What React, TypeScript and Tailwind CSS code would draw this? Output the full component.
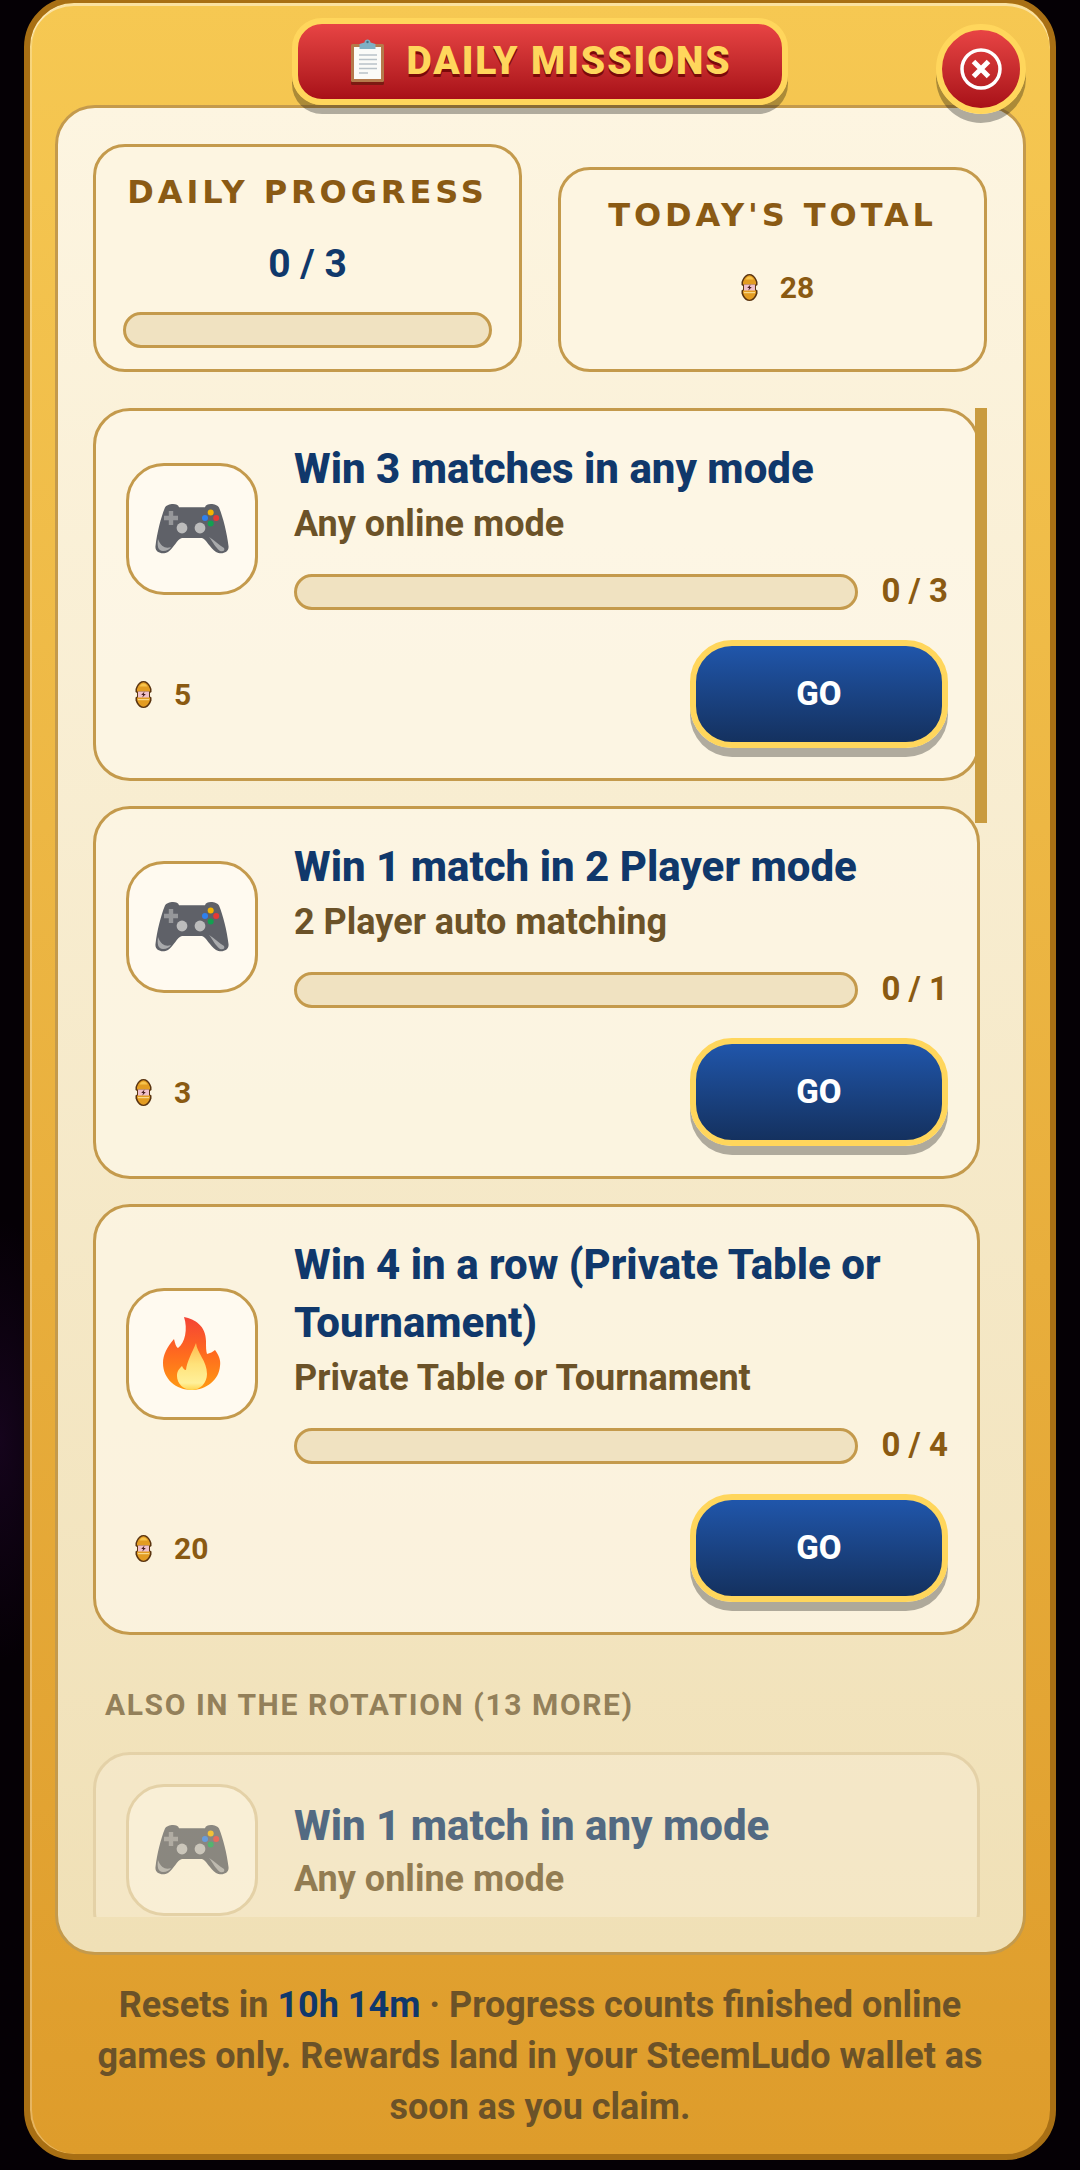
import React from "react";

const Pad = ({ className = "" }: { className?: string }) => (
  <svg viewBox="0 0 74 52" className={className}>
    <path d="M10 4.5C12 .5 23 -.5 24 4.2H50C51 -.5 62 .5 64 4.5C68 14 72 30 73.5 43C74.5 50 66 52 61 49C55 45 51 36 47 35H27C22 36 19 45 13 49C8 52 -.5 50 .5 43C2 30 6 14 10 4.5Z" fill="#5f6168" />
    <path d="M13.8 8H18.2V12.8H23V17.2H18.2V22H13.8V17.2H9V12.8H13.8Z" fill="#96979a" />
    <circle cx="27" cy="25" r="5.4" fill="#bcbcbc" />
    <circle cx="45" cy="25" r="5.4" fill="#bcbcbc" />
    <circle cx="55.7" cy="9.5" r="3" fill="#f5b400" />
    <circle cx="50" cy="15" r="3" fill="#2f80ed" />
    <circle cx="61.2" cy="15" r="3" fill="#e53935" />
    <circle cx="55.7" cy="20.5" r="3" fill="#12a150" />
    <path d="M3 36C2 43 3 48 8 48C12 48 15 46 16 44C11 46 6 44 3 36Z" fill="#a9aaac" />
    <path d="M54 34C58 39 60 44 65 48C69 49 70 47 69 45C64 42 59 37 54 34Z" fill="#a9aaac" />
  </svg>
);

const Flame = ({ className = "" }: { className?: string }) => (
  <svg viewBox="0 0 58 73" className={className}>
    <defs>
      <linearGradient id="fo" x1="0.5" y1="0" x2="0.5" y2="1">
        <stop offset="0" stopColor="#f44336" />
        <stop offset="0.5" stopColor="#ff6a1f" />
        <stop offset="1" stopColor="#ff9a12" />
      </linearGradient>
      <linearGradient id="fi" x1="0.5" y1="0" x2="0.5" y2="1">
        <stop offset="0" stopColor="#ffb84d" />
        <stop offset="0.45" stopColor="#ffe27a" />
        <stop offset="0.85" stopColor="#fff09a" />
        <stop offset="1" stopColor="#ffd54f" />
      </linearGradient>
    </defs>
    <path d="M21 0C32 2 43 9 43 24C43 30 43 34 44 37C47 36 50 35 52 33C56 38 58 44 57 49C56 63 43 73 29 73C13 73 0 62 0 46C0 38 4 30 11 22C12 26 13 30 15 31C22 26 25 12 21 0Z" fill="url(#fo)" />
    <path d="M33 26C34 36 44 44 44 57C44 66 37 73 29 73C20 73 14 66 14 59C14 54 16 52 19 49C20 51 21 53 23 53C24 44 29 36 33 26Z" fill="url(#fi)" />
  </svg>
);

const Coin = ({ className = "" }: { className?: string }) => (
  <svg viewBox="0 0 17 27" className={className}>
    <path d="M8.500 0C11.500 0 14 2 15.500 5.500L16.500 8V11L15 12V15.500L16.500 16.500V19.500L15.500 22C14 25 11.500 27 8.500 27C5.500 27 3 25 1.500 22L.5 19.500V16.500L2 15.500V12L.5 11V8L1.500 5.500C3 2 5.500 0 8.500 0Z" fill="#5a3410" />
    <path d="M8.500 1.300C11 1.300 13.500 3.500 15 8V10.500H2V8C3.500 3.500 6 1.300 8.500 1.300Z" fill="#e39c22" />
    <path d="M4.500 5.500C5.500 3.500 7 2.500 8.500 2.500C10 2.500 11.500 3.500 12.500 5.500Z" fill="#f7c44d" />
    <rect x="3" y="10.500" width="11" height="6.500" fill="#efc0ca" />
    <path d="M9.500 10.500L6.200 14H8.200L7.200 16.800L10.800 13H8.800Z" fill="#4a1e20" />
    <path d="M2 16.500H15V19C13.500 23.500 11 25.700 8.500 25.700C6 25.700 3.500 23.500 2 19Z" fill="#e39c22" />
    <path d="M3 18H14V19.200H3Z" fill="#f8d98a" />
  </svg>
);

const Clipboard = () => (
  <svg viewBox="0 0 33 46" className="w-[33px] h-[46px] shrink-0">
    <rect x="0" y="7" width="33" height="39" rx="1.500" fill="#7c1a12" />
    <rect x="0" y="5" width="33" height="38" rx="1.500" fill="#b57a4b" />
    <rect x="3" y="8" width="27" height="32" fill="#fbfbf8" />
    <path d="M8 16H26M8 20.500H26M8 25H26M8 29.500H26M8 34H17" stroke="#b9c2c8" strokeWidth="1.300" />
    <path d="M13.500 3.500C13.500 -.5 19.500 -.5 19.500 3.500L24.500 5V10H8.500V5Z" fill="#7fb0c4" />
    <circle cx="16.500" cy="3" r="1.200" fill="#3f6f85" />
  </svg>
);

const Bar = ({ className = "" }: { className?: string }) => (
  <div className={`h-[36px] rounded-full border-[3px] border-[#c49a4c] bg-[#f0e2c1] ${className}`} />
);

type Mission = { icon: "pad" | "fire"; title: string; sub: string; prog: string; reward: string };

const Card = ({ m }: { m: Mission }) => (
  <div className="w-[887px] shrink-0 rounded-[37px] border-[3px] border-[#c49a4c] bg-[#fef8ea]/70 pl-[30px] pr-[29px] pt-[29px] pb-[30px]">
    <div className="flex items-center gap-[36px]">
      <div className="mt-[7px] flex h-[132px] w-[132px] shrink-0 items-center justify-center rounded-[38px] border-[3px] border-[#c49a4c] bg-[#fffaf0]">
        {m.icon === "pad" ? <Pad className="h-[52px] w-[74px]" /> : <Flame className="h-[73px] w-[58px]" />}
      </div>
      <div className="min-w-0 flex-1">
        <div className="text-[42px] font-extrabold leading-[58px] text-[#10386b]">{m.title}</div>
        <div className="text-[36px] font-bold leading-[52px] text-[#6b5228]">{m.sub}</div>
        <div className="mt-[24px] flex items-center justify-between">
          <Bar className="w-[564px]" />
          <span className="-mt-[2px] whitespace-nowrap text-[33px] font-bold leading-[36px] text-[#8a5a12]">{m.prog}</span>
        </div>
      </div>
    </div>
    <div className="mt-[30px] flex items-center justify-between pl-[9px]">
      <div className="flex items-center gap-[22px]">
        <Coin className="h-[27px] w-[17px]" />
        <span className="text-[30px] font-bold text-[#8a5a12]">{m.reward}</span>
      </div>
      <button className="flex h-[108px] w-[258px] items-center justify-center rounded-[42px] border-[6px] border-[#ffd65c] bg-gradient-to-b from-[#2056ab] to-[#14315f] text-[33px] font-extrabold text-white shadow-[0_9px_0_rgba(0,0,0,0.3)]">
        GO
      </button>
    </div>
  </div>
);

const missions: Mission[] = [
  { icon: "pad", title: "Win 3 matches in any mode", sub: "Any online mode", prog: "0 / 3", reward: "5" },
  { icon: "pad", title: "Win 1 match in 2 Player mode", sub: "2 Player auto matching", prog: "0 / 1", reward: "3" },
  { icon: "fire", title: "Win 4 in a row (Private Table or Tournament)", sub: "Private Table or Tournament", prog: "0 / 4", reward: "20" },
];

const labelCls =
  "font-['DejaVu_Sans',sans-serif] font-bold text-[32px] leading-[42px] tracking-[3.9px] text-[#8a5a14] text-center whitespace-nowrap";

export default function App() {
  return (
    <div className="h-[2170px] overflow-hidden bg-[#050005] bg-[radial-gradient(ellipse_70px_220px_at_0px_1440px,#15041c,#050005)] font-['Roboto',sans-serif]">
      <div className="relative mx-[24px] -mt-[3px] flex h-[2163px] flex-col rounded-[50px] border-[6px] border-[#a86f14] bg-gradient-to-b from-[#f6c852] to-[#de9c2b] shadow-[inset_0_3px_0_rgba(255,255,255,0.45),inset_2px_0_0_rgba(255,255,255,0.25)]">
        <div className="relative z-10 flex h-[102px] shrink-0 justify-center pt-[15px]">
          <div className="flex h-[87px] w-[496px] items-center justify-center gap-[22px] rounded-[30px] border-[6px] border-[#ffd65c] bg-gradient-to-b from-[#e84444] to-[#a80f18] pl-[3px] shadow-[0_9px_0_rgba(0,0,0,0.3)]">
            <Clipboard />
            <span className="text-[39px] font-black tracking-[1.9px] text-[#ffd65c] [text-shadow:0_3px_0_#7a0a0a]">DAILY MISSIONS</span>
          </div>
          <button className="absolute right-[24px] top-[21px] flex h-[90px] w-[90px] items-center justify-center rounded-full border-[6px] border-[#ffd65c] bg-gradient-to-b from-[#e84444] to-[#a80f18] shadow-[0_9px_0_rgba(0,0,0,0.3)]">
            <svg viewBox="0 0 42 42" className="h-[42px] w-[42px]">
              <circle cx="21" cy="21" r="19" fill="none" stroke="#fff" strokeWidth="3.500" />
              <path d="M13.500 13.500L28.500 28.500M28.500 13.500L13.500 28.500" stroke="#fff" strokeWidth="5" />
            </svg>
          </button>
        </div>

        <div className="ml-[25px] mr-[24px] flex h-[1850px] min-h-0 flex-col rounded-[40px] border-[3px] border-[#c49a4c] bg-gradient-to-b from-[#fdf5e1] to-[#f0e0b6] pb-[35px] pl-[35px] pr-[36px] pt-[36px]">
          <div className="grid shrink-0 grid-cols-[429px_429px] items-end gap-[36px]">
            <div className="rounded-[32px] border-[3px] border-[#c49a4c] bg-[#fdf5e1] px-[27px] pb-[21px] pt-[24px]">
              <div className={labelCls}>DAILY PROGRESS</div>
              <div className="mt-[26px] text-center text-[39px] font-bold leading-[50px] text-[#10386b]">0 / 3</div>
              <Bar className="mt-[23px]" />
            </div>
            <div className="rounded-[32px] border-[3px] border-[#c49a4c] bg-[#fdf5e1] px-[27px] pb-[27px] pt-[24px]">
              <div className={labelCls}>TODAY'S TOTAL</div>
              <div className="mt-[24px] flex h-[54px] items-center justify-center gap-[22px] pl-[10px]">
                <Coin className="h-[27px] w-[17px]" />
                <span className="text-[30px] font-bold text-[#8a5a12]">28</span>
              </div>
              <div className="h-[28px]" />
            </div>
          </div>

          <div className="relative mt-[36px] min-h-0 flex-1 overflow-hidden">
            <div className="flex flex-col gap-[25px]">
              {missions.map((m) => (
                <Card key={m.title} m={m} />
              ))}
            </div>
            <div className="pl-[12px] pt-[50px] text-[30px] font-bold leading-[40px] tracking-[1.6px] text-[#93805a]">
              ALSO IN THE ROTATION (13 MORE)
            </div>
            <div className="mt-[27px] w-[887px] rounded-[37px] border-[3px] border-[#dfcba0] bg-[#fef8ea]/40 pl-[30px] pr-[29px] pt-[29px] pb-[29px] opacity-70">
              <div className="flex items-center gap-[36px]">
                <div className="flex h-[132px] w-[132px] shrink-0 items-center justify-center rounded-[38px] border-[3px] border-[#dfcba0] bg-[#fdf5e3]">
                  <Pad className="h-[52px] w-[74px]" />
                </div>
                <div>
                  <div className="text-[42px] font-extrabold leading-[58px] text-[#10386b]">Win 1 match in any mode</div>
                  <div className="text-[36px] font-bold leading-[49px] text-[#6b5228]">Any online mode</div>
                </div>
              </div>
            </div>
            <div className="absolute left-[882px] top-0 h-[415px] w-[12px] bg-[#c99b3f]" />
          </div>
        </div>

        <div className="flex-1 px-[40px] pt-[25px] text-center text-[36px] font-bold leading-[51px] text-[#6b5228]">
          Resets in <span className="font-bold text-[#10386b]">10h 14m</span> · Progress counts finished online games only. Rewards land in your SteemLudo wallet as soon as you claim.
        </div>
      </div>
    </div>
  );
}
